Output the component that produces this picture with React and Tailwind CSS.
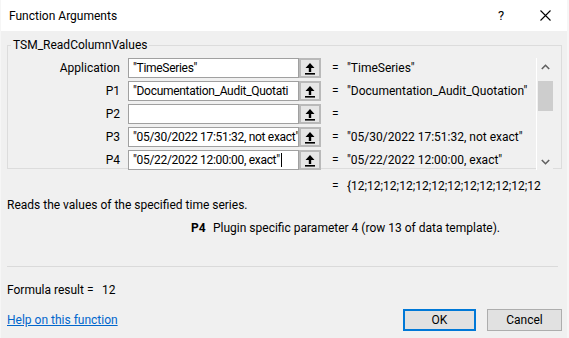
import React from "react";

const font = { fontFamily: 'Roboto, "Noto Sans", sans-serif' };

function RefIcon() {
  return (
    <svg width="12" height="13" viewBox="0 0 12 13">
      <path d="M6 1 L10.5 6 L7.2 6 L7.2 10 L4.8 10 L4.8 6 L1.5 6 Z" fill="#000" />
      <rect x="1" y="11" width="10" height="1.6" fill="#000" />
    </svg>
  );
}

function Row({ label, value, result, cursor }) {
  return (
    <div className="flex items-center h-[20px]">
      <div className="w-[112px] shrink-0 text-right text-[12px] text-black">{label}</div>
      <div className="ml-[8px] w-[171px] shrink-0 h-[20px] bg-white border border-[#a0a0a0] flex items-center pl-[4px] text-[12px] text-black whitespace-nowrap overflow-hidden">
        <span className="tracking-[-0.3px]">{value}</span>
        {cursor && <span className="inline-block w-[1px] h-[14px] bg-black ml-[1px]" />}
      </div>
      <div className="w-[22px] shrink-0 h-[20px] border-2 border-[#b9b9b9] bg-[#e6e6e6] flex items-center justify-center">
        <RefIcon />
      </div>
      <div className="ml-[11px] shrink-0 text-[12px] text-black w-[15px]">=</div>
      <div className="text-[12px] text-black whitespace-nowrap">{result}</div>
    </div>
  );
}

export default function App() {
  return (
    <div className="w-[569px] h-[338px] bg-[#f6f6f6] overflow-hidden" style={font}>
      <div className="ml-[1px] w-[566px] h-[338px] flex flex-col bg-[#f0f0f0]">
        <div className="h-[31px] bg-white flex items-center shrink-0">
          <div className="pl-[8px] text-[12px] text-black">Function Arguments</div>
          <div className="ml-auto w-[12px] text-[13px] text-black mr-[33px] text-center">?</div>
          <svg width="11" height="11" viewBox="0 0 11 11" className="mr-[16px]">
            <path d="M0.5 0.5 L10.5 10.5 M10.5 0.5 L0.5 10.5" stroke="#000" strokeWidth="1.1" />
          </svg>
        </div>
        <fieldset className="mt-[7px] ml-[6px] w-[555px] h-[131px] border border-[#dcdcdc] px-0 pt-0 pb-0 relative">
          <legend className="ml-[3px] px-[2px] text-[12px] text-black leading-[14px]">TSM_ReadColumnValues</legend>
          <div className="flex mt-[6px]">
            <div className="flex flex-col gap-[3px] w-[528px] shrink-0">
              <Row label="Application" value={'"TimeSeries"'} result={'"TimeSeries"'} />
              <Row label="P1" value={'"Documentation_Audit_Quotati'} result={'"Documentation_Audit_Quotation"'} />
              <Row label="P2" value="" result="" />
              <Row label="P3" value={'"05/30/2022 17:51:32, not exact"'} result={'"05/30/2022 17:51:32, not exact"'} />
              <Row label="P4" value={'"05/22/2022 12:00:00, exact"'} result={'"05/22/2022 12:00:00, exact"'} cursor />
            </div>
            <div className="w-[17px] h-[112px] border-l border-white flex flex-col items-center bg-[#f0f0f0]">
              <div className="h-[17px] flex items-center justify-center">
                <svg width="9" height="6" viewBox="0 0 9 6">
                  <path d="M0.8 5 L4.5 1.3 L8.2 5" stroke="#606060" strokeWidth="1.6" fill="none" />
                </svg>
              </div>
              <div className="w-[15px] h-[30px] bg-[#cdcdcd] mt-[6px]" />
              <div className="flex-1" />
              <div className="h-[17px] flex items-center justify-center">
                <svg width="9" height="6" viewBox="0 0 9 6">
                  <path d="M0.8 1 L4.5 4.7 L8.2 1" stroke="#606060" strokeWidth="1.6" fill="none" />
                </svg>
              </div>
            </div>
          </div>
        </fieldset>
        <div className="flex mt-[9px] text-[12px] text-black h-[16px] items-center">
          <div className="ml-[331px] w-[15px]">=</div>
          <div className="whitespace-nowrap">{"{12;12;12;12;12;12;12;12;12;12;12;12"}</div>
        </div>
        <div className="ml-[6px] mt-[3px] text-[12px] text-black h-[16px] flex items-center">
          Reads the values of the specified time series.
        </div>
        <div className="flex mt-[7px] text-[12px] text-black h-[16px] items-center">
          <div className="ml-[190px] w-[22px] font-bold">P4</div>
          <div>Plugin specific parameter 4 (row 13 of data template).</div>
        </div>
        <div className="ml-[6px] w-[551px] h-[1px] bg-[#dadada] mt-[30px]" />
        <div className="flex mt-[15px] ml-[6px] text-[12px] text-black h-[16px] items-center">
          <div className="w-[95px]">Formula result =</div>
          <div>12</div>
        </div>
        <div className="flex items-center mt-[11px]">
          <a className="ml-[6px] text-[12px] text-[#0066cc] underline">Help on this function</a>
          <button className="ml-auto w-[73px] h-[22px] border-2 border-[#0078d7] bg-[#e1e1e1] text-[12px] text-black">OK</button>
          <button className="ml-[11px] mr-[5px] w-[75px] h-[22px] border border-[#adadad] bg-[#e1e1e1] text-[12px] text-black">Cancel</button>
        </div>
      </div>
    </div>
  );
}
